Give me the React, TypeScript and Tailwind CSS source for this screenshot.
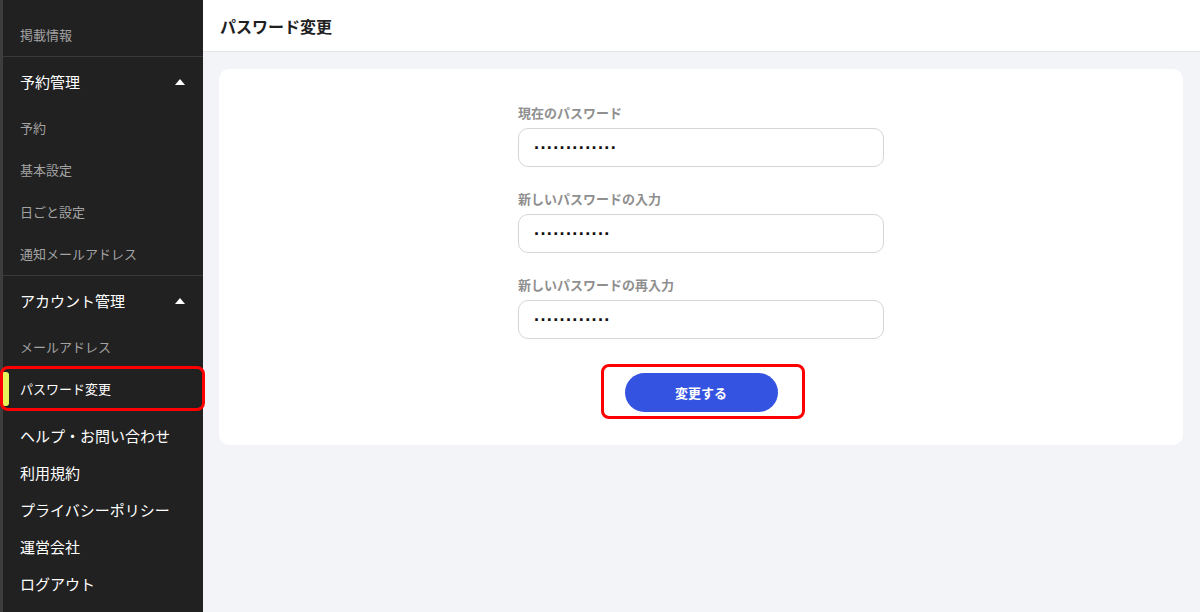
import React from 'react';

const jp = { fontFamily: '"Noto Sans CJK JP", "Noto Sans", sans-serif' };

const Triangle = () => (
  <svg width="10" height="6" viewBox="0 0 10 6" className="mr-[2px]">
    <path d="M5 0 L10 6 L0 6 Z" fill="#ffffff" />
  </svg>
);

const SubItem = ({ label }: { label: string }) => (
  <div className="h-[42px] flex items-center pl-[17px] text-[13px] text-[#a3a3a3]">{label}</div>
);

const SectionHead = ({ label }: { label: string }) => (
  <div className="h-[50px] flex items-center justify-between pl-[17px] pr-[16px] text-[15px] font-normal text-white">
    <span>{label}</span>
    <Triangle />
  </div>
);

const FooterItem = ({ label }: { label: string }) => (
  <div className="h-[37px] flex items-center pl-[17px] text-[15px] font-normal text-white">{label}</div>
);

const Field = ({ label, dots }: { label: string; dots: number }) => (
  <div className="flex flex-col">
    <label className="h-[18px] flex items-center text-[13px] font-bold text-[#8f8f8f]">{label}</label>
    <div className="mt-[6px] h-[39px] rounded-[10px] border border-[#d6d6d6] bg-white flex items-center pl-[15px]">
      <span className="text-[18px] font-bold leading-none tracking-[0.4px] text-[#111]" style={{ fontFamily: '"Liberation Sans", sans-serif' }}>
        {'·'.repeat(dots)}
      </span>
    </div>
  </div>
);

export default function App() {
  return (
    <div className="flex w-[1200px] h-[612px] overflow-hidden" style={jp}>
      {/* Sidebar */}
      <aside className="w-[203px] shrink-0 bg-[#212121] border-l-[3px] border-[#3d3d3d] flex flex-col pt-[14px]">
        <SubItem label="掲載情報" />
        <div className="h-px bg-[#3a3a3a]" />
        <SectionHead label="予約管理" />
        <SubItem label="予約" />
        <SubItem label="基本設定" />
        <SubItem label="日ごと設定" />
        <SubItem label="通知メールアドレス" />
        <div className="h-px bg-[#3a3a3a]" />
        <SectionHead label="アカウント管理" />
        <SubItem label="メールアドレス" />
        <div className="relative h-[42px] flex items-center pl-[17px] text-[13px] text-white">
          <div className="absolute left-0 top-[4px] bottom-[4px] w-[6px] rounded-r-[3px] bg-[#e8f55a]" />
          <span>パスワード変更</span>
          <div className="absolute left-[-3px] right-[-2px] top-[-2px] bottom-[-1px] rounded-[8px] border-[3px] border-[#ff0000]" />
        </div>
        <div className="pt-[8px]">
          <FooterItem label="ヘルプ・お問い合わせ" />
          <FooterItem label="利用規約" />
          <FooterItem label="プライバシーポリシー" />
          <FooterItem label="運営会社" />
          <FooterItem label="ログアウト" />
        </div>
      </aside>

      {/* Main */}
      <main className="flex-1 flex flex-col bg-[#f3f4f8]">
        <header className="h-[52px] shrink-0 bg-white border-b border-[#e4e4e6] flex items-center pl-[17px]">
          <h1 className="text-[16px] font-bold text-[#1f1f1f]">パスワード変更</h1>
        </header>
        <div className="pt-[17px] pl-[16px] pr-[17px]">
          <div className="bg-white rounded-[10px] pt-[35px] pb-[33px] flex flex-col items-center">
            <div className="w-[366px] flex flex-col gap-[23px]">
              <Field label="現在のパスワード" dots={13} />
              <Field label="新しいパスワードの入力" dots={12} />
              <Field label="新しいパスワードの再入力" dots={12} />
            </div>
            <div className="relative mt-[34px]">
              <button className="w-[153px] h-[39px] rounded-full bg-[#3453e0] text-white text-[13px] font-bold">
                変更する
              </button>
              <div className="absolute left-[-24px] right-[-27px] top-[-9px] bottom-[-7px] rounded-[8px] border-[3px] border-[#ff0000]" />
            </div>
          </div>
        </div>
      </main>
    </div>
  );
}
